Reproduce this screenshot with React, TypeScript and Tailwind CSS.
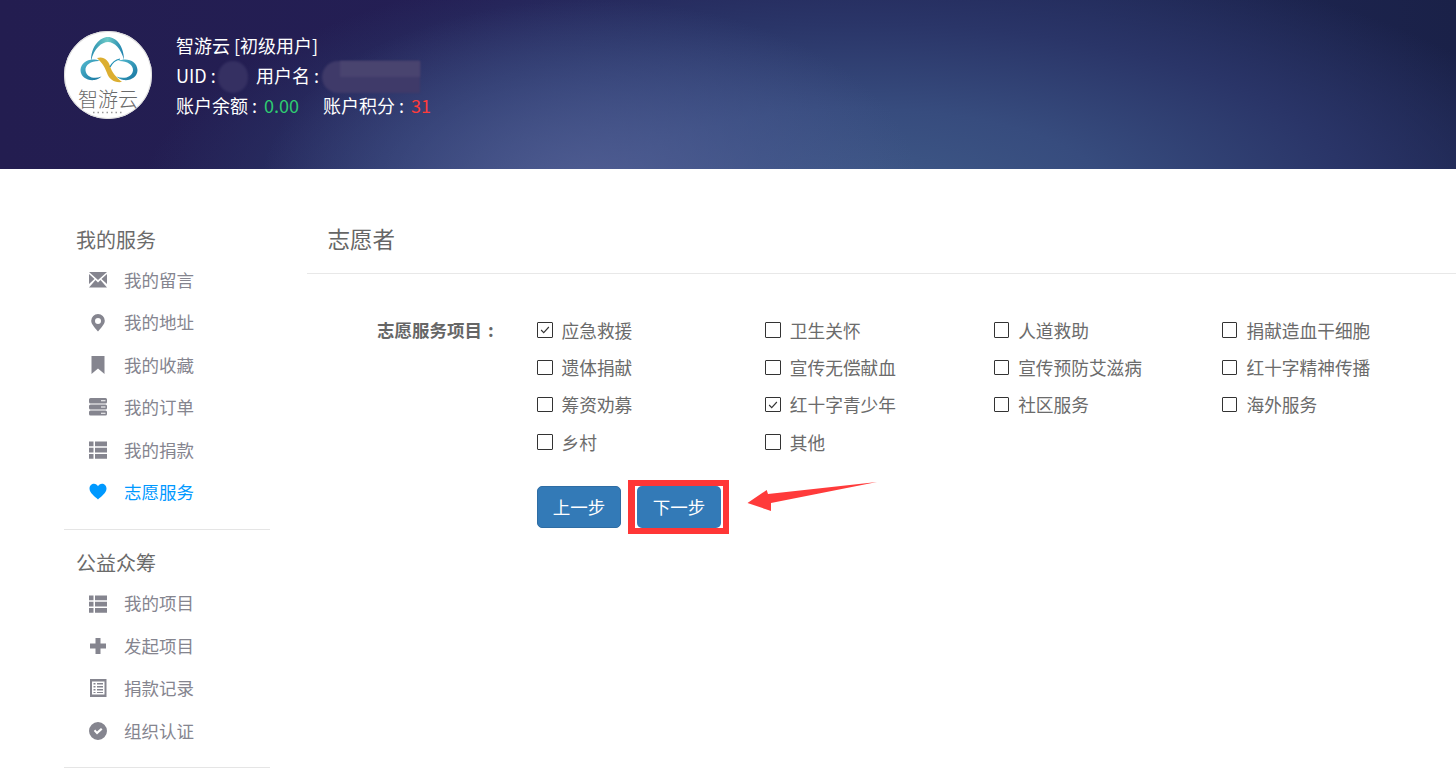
import React from "react";

const font = { fontFamily: '"Noto Sans CJK SC", "Liberation Sans", sans-serif' };

const icons: Record<string, React.ReactNode> = {
  mail: (
    <>
      <path d="M0 1h18L9 9z" />
      <path d="M0 3l5.500 5L0 13zM18 3l-5.500 5 5.500 5zM0 16.500l6.500-7.500L9 11.500l2.500-2.500 6.500 7.500z" />
    </>
  ),
  pin: <path fillRule="evenodd" d="M9 0a6.800 6.800 0 0 1 6.800 6.800C15.800 10.500 11 15 9 17.500 7 15 2.200 10.500 2.200 6.800A6.800 6.800 0 0 1 9 0zm0 4a3 3 0 1 0 0 6 3 3 0 0 0 0-6z" />,
  bookmark: <path d="M2.500 0h13v18L9 12.500 2.500 18z" />,
  server: (
    <path fillRule="evenodd" d="M1.500 0h15A1.500 1.500 0 0 1 18 1.500V4a1.500 1.500 0 0 1-1.500 1.500h-15A1.500 1.500 0 0 1 0 4V1.500A1.500 1.500 0 0 1 1.500 0zM1.500 6.500h15A1.500 1.500 0 0 1 18 8v2a1.500 1.500 0 0 1-1.500 1.500h-15A1.500 1.500 0 0 1 0 10V8a1.500 1.500 0 0 1 1.500-1.500zM1.500 12.500h15A1.500 1.500 0 0 1 18 14v2a1.500 1.500 0 0 1-1.500 1.500h-15A1.500 1.500 0 0 1 0 16v-2a1.500 1.500 0 0 1 1.500-1.500zM12 2.200v1h4.500v-1zM12 8.500v1h4.500v-1zM12 14.800v1h4.500v-1z" />
  ),
  list: <path d="M0 .5h4.500v4.700H0zM6 .5h12v4.700H6zM0 6.800h4.500v4.700H0zM6 6.800h12v4.700H6zM0 13h4.500v4.700H0zM6 13h12v4.700H6z" />,
  heart: <path d="M9 16.500C6 13.500 .5 10 .5 5.500.5 2.500 2.800 .8 5 .8 6.800 .8 8.200 1.800 9 3.200 9.800 1.800 11.200 .8 13 .8c2.200 0 4.500 1.700 4.500 4.700 0 4.500-5.500 8-8.500 11z" />,
  plus: <path d="M6.500 1h5v5.500H17v5h-5.500V17h-5v-5.500H1v-5h5.500z" />,
  ledger: (
    <path fillRule="evenodd" d="M1 0h16.500v18H1zM3 2.500v13h12.500v-13zM4.500 4h2v1.500h-2zM8 4h6v1.500H8zM4.500 7h2v1.500h-2zM8 7h6v1.500H8zM4.500 10h2v1.500h-2zM8 10h6v1.500H8zM4.500 13h2v1h-2zM8 13h6v1H8z" />
  ),
  check: (
    <path fillRule="evenodd" d="M9 0a9 9 0 1 1 0 18A9 9 0 0 1 9 0zM4.800 9l3.200 3.500L13.500 7.500 12 6 8 9.500 6.200 7.600z" />
  ),
};

function Icon({ name }: { name: string }) {
  return (
    <svg viewBox="0 0 18 18" className="w-[18px] h-[18px]" fill="currentColor">
      {icons[name]}
    </svg>
  );
}

function NavItem({ icon, label, active }: { icon: string; label: string; active?: boolean }) {
  return (
    <div className={`flex items-center h-[42.4px] pl-[25px] ${active ? "text-[#0099ff]" : "text-[#85858f]"}`}>
      <Icon name={icon} />
      <span className="ml-[17px] text-[17.500px]">{label}</span>
    </div>
  );
}

function Check({ label, checked }: { label: string; checked?: boolean }) {
  return (
    <div className="flex items-center h-[37.300px] text-[#6b6b6b] text-[17.700px]">
      <span className="w-[15.500px] h-[15.500px] border border-[#333] rounded-[1px] bg-white flex items-center justify-center">
        {checked && (
          <svg viewBox="0 0 14 14" className="w-3 h-3" fill="none" stroke="#333" strokeWidth="1.300">
            <path d="M2.500 7l3 3 6-6.500" />
          </svg>
        )}
      </span>
      <span className="ml-[9px]">{label}</span>
    </div>
  );
}

function Logo() {
  return (
    <div className="relative w-[88px] h-[88px] rounded-full bg-white shrink-0 ring-1 ring-inset ring-[#ddd]">
      <svg viewBox="0 0 88 88" className="absolute inset-0 w-full h-full" fill="none">
        <defs>
          <linearGradient id="lg1" x1="0" y1="0" x2="1" y2="0">
            <stop offset="0" stopColor="#2a8fb0" />
            <stop offset="0.500" stopColor="#6cc9c6" />
            <stop offset="1" stopColor="#1b7fae" />
          </linearGradient>
          <linearGradient id="lg2" x1="0" y1="0" x2="1" y2="1">
            <stop offset="0" stopColor="#55bcd0" />
            <stop offset="1" stopColor="#14739f" />
          </linearGradient>
        </defs>
        <path d="M27 30C27 15 36 6 44 6s16 9 16 23C57 17 50 11 44 11S30 17 27 30z" fill="url(#lg1)" />
        <path d="M36 30C26 26 17 31 16.500 39c0 7 7 11 14 10 3-.5 5-1.500 7-3.500-7 3-15 1-16-6-.5-6 6-10 14.500-9.500z" fill="url(#lg2)" />
        <path d="M54 30c9-4 19 0 19.500 9 0 7-7 11-14 10-3-.5-5-1.500-7-3.500 7 3 15.500 1 16.500-6 .5-6-6.500-10-15-9.500z" fill="url(#lg2)" />
        <path d="M33 27c7-2 11 2 13 8 2 7 6 11 12 16-8 1-13-3-15-9-3-8-6-11-10-15z" fill="#dcae30" />
        <path d="M56 28c-5 1-8 4-10 8" stroke="#1f8fb5" strokeWidth="1.200" />
        <path d="M29 81.500h30" stroke="#999" strokeWidth="1.300" strokeDasharray="1.500 3" />
      </svg>
      <span className="absolute left-0 right-0 top-[55px] text-center text-[20px] leading-[26px] text-[#6a6a6a] font-light whitespace-nowrap">智游云</span>
    </div>
  );
}

const rows: [string, boolean?][][] = [
  [["应急救援", true], ["卫生关怀"], ["人道救助"], ["捐献造血干细胞"]],
  [["遗体捐献"], ["宣传无偿献血"], ["宣传预防艾滋病"], ["红十字精神传播"]],
  [["筹资劝募"], ["红十字青少年", true], ["社区服务"], ["海外服务"]],
  [["乡村"], ["其他"]],
];

export default function App() {
  return (
    <div style={font} className="relative w-[1456px] h-[780px] overflow-hidden bg-white">
      <header className="h-[169px] pl-16 pt-[31px] flex text-white bg-[radial-gradient(ellipse_330px_190px_at_590px_190px,rgba(84,96,150,0.85)_0%,rgba(76,90,146,0.45)_55%,rgba(60,70,130,0)_100%),radial-gradient(ellipse_720px_260px_at_860px_200px,#3f5a88_0%,#374c7e_35%,#2a3568_68%,rgba(32,38,84,0)_100%),linear-gradient(90deg,#231d50_0%,#241f55_35%,#1f2755_75%,#1a2148_100%)]">
        <Logo />
        <div className="ml-6 text-[18px] leading-[30px] -mt-px">
          <div className="h-[30px] whitespace-nowrap">智游云 [初级用户]</div>
          <div className="relative h-[30px] whitespace-nowrap">
            <span>UID :</span>
            <span className="absolute left-[80px]">用户名 :</span>
            <span className="absolute left-[42px] top-[1px] w-[30px] h-8 rounded-full bg-[#353062] blur-[1px]" />
            <span className="absolute left-[146px] top-[1px] w-[98px] h-8 rounded-l-full bg-[#3f3a69] blur-[1px]" />
            <span className="absolute left-[164px] top-[1px] w-[80px] h-[16px] bg-[#49446f] blur-[1px]" />
          </div>
          <div className="h-[30px] whitespace-nowrap flex">
            <span>账户余额 :</span>
            <span className="ml-[7px] text-[#2ecc71]">0.00</span>
            <span className="ml-6">账户积分 :</span>
            <span className="ml-[7px] text-[#ff3b3b]">31</span>
          </div>
        </div>
      </header>

      <div className="flex pl-16 pt-[51px]">
        <aside className="w-[206px] shrink-0">
          <div className="h-[39px] pl-3 leading-10 text-[20px] text-[#6b6b6b]">我的服务</div>
          <NavItem icon="mail" label="我的留言" />
          <NavItem icon="pin" label="我的地址" />
          <NavItem icon="bookmark" label="我的收藏" />
          <NavItem icon="server" label="我的订单" />
          <NavItem icon="list" label="我的捐款" />
          <NavItem icon="heart" label="志愿服务" active />
          <div className="h-px bg-[#e5e5e5] mt-4 mb-[13px]" />
          <div className="h-[39px] pl-3 leading-10 text-[20px] text-[#6b6b6b]">公益众筹</div>
          <NavItem icon="list" label="我的项目" />
          <NavItem icon="plus" label="发起项目" />
          <NavItem icon="ledger" label="捐款记录" />
          <NavItem icon="check" label="组织认证" />
          <div className="h-px bg-[#e5e5e5] mt-[15px]" />
        </aside>

        <main className="ml-[37px] flex-1">
          <div className="h-[54px] pl-[20.500px] leading-9 text-[22.500px] text-[#666] border-b border-[#e8e8e8]">志愿者</div>
          <div className="flex pt-[37.500px]">
            <div className="w-[190px] shrink-0 pl-[70px] h-[37px] leading-[36px] font-bold text-[17.500px] text-[#666] whitespace-nowrap">
              志愿服务项目<span className="ml-[6px]">:</span>
            </div>
            <div className="ml-10">
              <div className="grid grid-cols-[228.330px_228.330px_228.330px_228.330px]">
                {rows.flat().map(([label, checked]) => (
                  <Check key={label} label={label} checked={checked} />
                ))}
              </div>
              <div className="flex mt-[25.500px] gap-4">
                <button className="w-[84px] h-[42px] rounded-[5px] bg-[#337ab7] border border-[#2e6da4] text-white text-[17.500px]">上一步</button>
                <div className="relative">
                  <button className="w-[84px] h-[42px] rounded-[5px] bg-[#337ab7] text-white text-[17.500px]">下一步</button>
                  <span className="absolute -left-[9px] -top-[6px] w-[101px] h-[54px] border-[6px] border-l-[7px] border-[#ff3636]" />
                </div>
              </div>
            </div>
          </div>
        </main>
      </div>

      <svg className="absolute left-[740px] top-[475px]" width="145" height="45" viewBox="740 475 145 45" fill="#ff3b3b">
        <path d="M747.500 503L766.700 490 768 494 877 482 771 503 771 511z" />
      </svg>
    </div>
  );
}
